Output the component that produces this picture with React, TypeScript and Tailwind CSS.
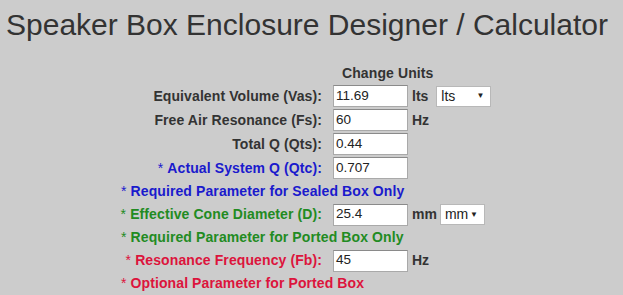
import React from "react";

const font = { fontFamily: '"Liberation Sans", Arial, sans-serif' };

function Sel({ value, w, ml }: { value: string; w: string; ml: string }) {
  return (
    <div
      className={`${ml} h-[21px] ${w} bg-white border border-[#b8b8b8] flex items-center justify-between pl-[4px] pr-[6px] text-[14px] font-normal text-[#222]`}
    >
      <span>{value}</span>
      <span className="text-[8px] leading-none">▼</span>
    </div>
  );
}

function Inp({ value }: { value: string }) {
  return (
    <div className="w-[75px] h-[22px] bg-white border border-[#a9a9a9] border-t-[#8a8a8a] flex items-center pl-[2px] text-[13.5px] font-normal text-[#222]">
      {value}
    </div>
  );
}

function Row({
  label,
  color,
  star,
  value,
  unit,
  sel,
  selW,
  selMl,
  h = "h-[24px]",
}: {
  label: string;
  color: string;
  star?: boolean;
  value: string;
  unit?: string;
  sel?: string;
  selW?: string;
  selMl?: string;
  h?: string;
}) {
  return (
    <div className={`flex items-center ${h}`}>
      <div className={`w-[204px] pr-[1px] text-right text-[14px] font-bold tracking-[0.1px] whitespace-nowrap ${color}`}>
        {star && <span className="font-normal">* </span>}
        {label}
      </div>
      <div className="ml-[10px]">
        <Inp value={value} />
      </div>
      {unit && <span className="ml-[4px] text-[14px] font-bold text-[#333]">{unit}</span>}
      {sel && <Sel value={sel} w={selW || "w-[55px]"} ml={selMl || "ml-[7px]"} />}
    </div>
  );
}

function Note({ text, color }: { text: string; color: string }) {
  return (
    <div className={`h-[23px] flex items-center pl-[2px] text-[14px] font-bold tracking-[0.1px] whitespace-nowrap ${color}`}>
      <span className="font-normal">*&nbsp;</span>
      {text}
    </div>
  );
}

export default function App() {
  return (
    <div className="w-[623px] h-[295px] bg-[#cccccc] overflow-hidden" style={font}>
      <h1 className="pt-[8px] pl-[6px] text-[30px] leading-[34px] font-normal text-[#333] whitespace-nowrap">
        Speaker Box Enclosure Designer / Calculator
      </h1>
      <div className="ml-[119px] mt-[20px]">
        <div className="h-[22px] flex items-center pl-[223px] text-[14px] font-bold tracking-[0.1px] text-[#333]">
          Change Units
        </div>
        <Row label="Equivalent Volume (Vas):" color="text-[#333]" value="11.69" unit="lts" sel="lts" selW="w-[55px]" selMl="ml-[8px]" />
        <Row label="Free Air Resonance (Fs):" color="text-[#333]" value="60" unit="Hz" />
        <Row label="Total Q (Qts):" color="text-[#333]" value="0.44" />
        <Row label="Actual System Q (Qtc):" color="text-[#1a1acc]" star value="0.707" />
        <Note text="Required Parameter for Sealed Box Only" color="text-[#1a1acc]" />
        <Row label="Effective Cone Diameter (D):" color="text-[#228b22]" star value="25.4" unit="mm" sel="mm" selW="w-[45px]" selMl="ml-[3px]" h="h-[23px]" />
        <Note text="Required Parameter for Ported Box Only" color="text-[#228b22]" />
        <Row label="Resonance Frequency (Fb):" color="text-[#dc143c]" star value="45" unit="Hz" h="h-[23px]" />
        <Note text="Optional Parameter for Ported Box" color="text-[#dc143c]" />
      </div>
    </div>
  );
}
